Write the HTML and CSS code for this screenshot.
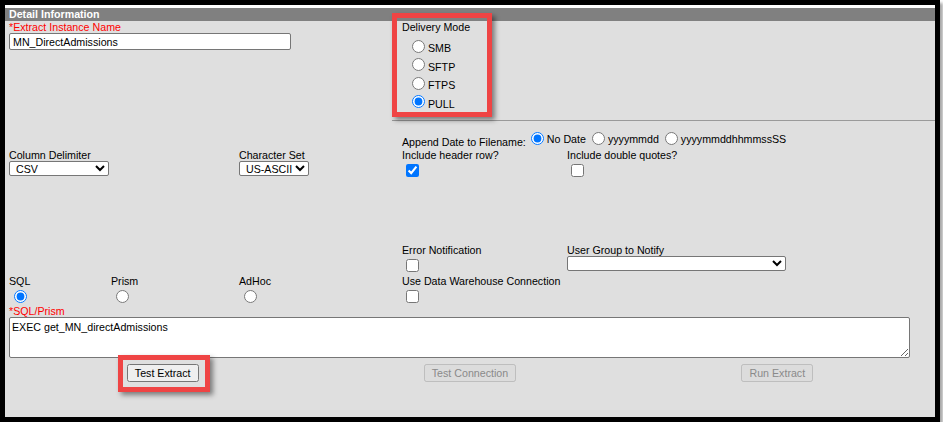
FILE: index.html
```html
<!DOCTYPE html>
<html lang="en">
<head>
    <meta charset="UTF-8">
    <title>Detail Information</title>
    <link rel="stylesheet" href="styles.css">
</head>
<body>
    <div class="frame">
        <div class="header">Detail Information</div>

        <div class="form">
            <!-- name + delivery mode -->
            <div class="row-top">
                <div class="cell">
                    <label class="label req" for="name">*Extract Instance Name</label>
                    <input type="text" id="name" class="text-input" value="MN_DirectAdmissions">
                </div>
                <div class="cell delivery">
                    <div class="label">Delivery Mode</div>
                    <div class="options">
                        <label class="option"><input type="radio" name="mode"><span>SMB</span></label>
                        <label class="option"><input type="radio" name="mode"><span>SFTP</span></label>
                        <label class="option"><input type="radio" name="mode"><span>FTPS</span></label>
                        <label class="option"><input type="radio" name="mode" checked><span>PULL</span></label>
                    </div>
                </div>
            </div>

            <div class="divider"></div>

            <!-- file format -->
            <div class="row row-file">
                <div class="append">
                    <span class="append-title">Append Date to Filename:</span>
                    <input type="radio" name="date" checked><span class="radio-text">No Date</span>
                    <input type="radio" name="date"><span class="radio-text">yyyymmdd</span>
                    <input type="radio" name="date"><span class="radio-text">yyyymmddhhmmssSS</span>
                </div>
                <div class="cell">
                    <div class="label">Column Delimiter</div>
                    <select class="select delim">
                        <option>CSV</option>
                    </select>
                </div>
                <div class="cell">
                    <div class="label">Character Set</div>
                    <select class="select charset">
                        <option>US-ASCII</option>
                    </select>
                </div>
                <div class="cell">
                    <div class="label">Include header row?</div>
                    <input type="checkbox" checked>
                </div>
                <div class="cell">
                    <div class="label">Include double quotes?</div>
                    <input type="checkbox">
                </div>
            </div>

            <!-- notification -->
            <div class="row row-notify">
                <div class="cell col-3">
                    <div class="label">Error Notification</div>
                    <input type="checkbox">
                </div>
                <div class="cell col-4">
                    <div class="label">User Group to Notify</div>
                    <select class="select group">
                        <option></option>
                    </select>
                </div>
            </div>

            <!-- source type -->
            <div class="row-sql">
                <div class="cell">
                    <div class="label">SQL</div>
                    <input type="radio" name="type" checked>
                </div>
                <div class="cell">
                    <div class="label">Prism</div>
                    <input type="radio" name="type">
                </div>
                <div class="cell">
                    <div class="label">AdHoc</div>
                    <input type="radio" name="type">
                </div>
                <div class="cell">
                    <div class="label">Use Data Warehouse Connection</div>
                    <input type="checkbox">
                </div>
            </div>

            <label class="label req sql-label" for="sql">*SQL/Prism</label>
            <textarea id="sql" class="sql">EXEC get_MN_directAdmissions</textarea>

            <div class="buttons">
                <span class="mark-btn"><button type="button">Test Extract</button></span>
                <button type="button" disabled>Test Connection</button>
                <button type="button" disabled>Run Extract</button>
            </div>
        </div>
    </div>
</body>
</html>
```

FILE: styles.css
```css
*, *::before, *::after {
    box-sizing: border-box;
}

body {
    margin: 0;
    background: #fff;
    font-family: "Liberation Sans", Arial, sans-serif;
    font-size: 8pt;
    color: #000;
}

input, select, textarea, button {
    font-family: inherit;
    font-size: 8pt;
}

.frame {
    width: 940px;
    border: 5px solid #000;
    background: #dfdfdf;
    box-shadow: 3px 3px 3px rgba(0, 0, 0, 0.35);
}

.header {
    height: 16px;
    border-top: 3px solid #fff;
    background: #808080;
    color: #fff;
    font-weight: bold;
    line-height: 13px;
    padding-left: 4px;
}

.form {
    padding: 0 4px 35px 4px;
}

.label {
    display: block;
    line-height: 12px;
}

.req {
    color: #f00;
}

.text-input {
    display: block;
    width: 282px;
    height: 17px;
    margin: 0;
    padding: 0 3px;
    border: 1px solid #767676;
    border-radius: 2px;
    background: #fff;
}

/* top row */
.row-top {
    display: grid;
    grid-template-columns: 393px 165px 1fr;
}

.delivery {
    position: relative;
}

.delivery::after {
    content: '';
    position: absolute;
    left: -10px;
    top: -8px;
    width: 100px;
    height: 104px;
    border: 5px solid #ef4444;
    box-shadow: 3px 3px 5px rgba(0, 0, 0, 0.45);
    pointer-events: none;
}

.options {
    margin-top: 4px;
    padding-left: 5px;
}

.option {
    display: flex;
    align-items: center;
    height: 18.5px;
}

.option input {
    margin: 0 3px 0 5px;
}

.option span {
    padding-top: 4px;
    line-height: 12px;
}

.divider {
    margin: 9px -4px 0 383px;
    border-top: 1px solid #9a9a9a;
}

/* grid rows */
.row {
    display: grid;
    grid-template-columns: 230px 163px 165px 1fr;
    align-items: start;
}

.row input[type="checkbox"],
.row-sql input[type="checkbox"] {
    margin: 3px 3px 3px 4px;
}

.row-sql input[type="radio"] {
    margin: 3px 3px 0 5px;
}

.row-file {
    margin-top: 10px;
}

.append {
    grid-column: 3 / 5;
    display: flex;
    align-items: flex-start;
    height: 18px;
    line-height: 12px;
}

.append-title {
    margin-top: 5px;
}

.append input {
    margin: 1px 3px 0 5px;
}

.append .radio-text {
    margin-top: 2px;
    margin-right: 1px;
}

.select {
    display: block;
    height: 15px;
    margin: 0;
    padding: 0 0 0 2px;
    border: 1px solid #767676;
    border-radius: 2px;
    background: #fff;
    line-height: 13px;
}

.delim {
    width: 100px;
}

.charset {
    width: 70px;
}

.group {
    width: 219px;
}

.row-notify {
    margin-top: 63.5px;
}

.col-3 {
    grid-column: 3;
}

.col-4 {
    grid-column: 4;
}

.row-sql {
    display: grid;
    grid-template-columns: 102px 128px 163px 165px 1fr;
    align-items: start;
}

.sql-label {
    line-height: 11px;
}

.sql {
    display: block;
    width: 901px;
    height: 41px;
    margin: 0;
    padding: 3px 2px;
    border: 1px solid #767676;
    border-radius: 2px;
    background: #fff;
    line-height: 12px;
    resize: both;
}

.buttons {
    display: grid;
    grid-template-columns: repeat(3, 1fr);
    justify-items: center;
    margin-top: 6.5px;
}

.buttons button {
    height: 18px;
    padding: 0 6px;
    line-height: 14px;
}

.buttons button:disabled {
    color: #8a8a8a;
}

.mark-btn {
    position: relative;
    display: inline-block;
}

.mark-btn button {
    display: block;
}

.mark-btn::after {
    content: '';
    position: absolute;
    top: -9px;
    right: -11px;
    bottom: -10px;
    left: -9px;
    border: 5px solid #ef4444;
    box-shadow: 3px 3px 5px rgba(0, 0, 0, 0.45);
    pointer-events: none;
}
```
